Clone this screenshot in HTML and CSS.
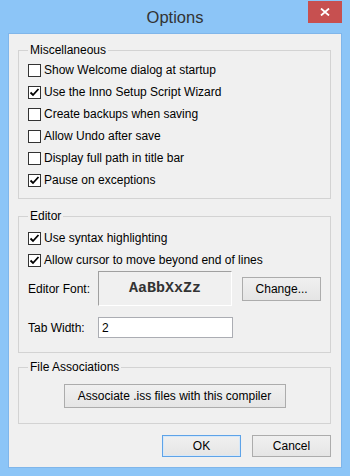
FILE: index.html
```html
<!DOCTYPE html>
<html lang="en">
<head>
    <meta charset="UTF-8">
    <meta name="viewport" content="width=device-width, initial-scale=1.0">
    <title>Options</title>
    <link rel="stylesheet" href="styles.css">
</head>
<body>

<div class="window">
    <div class="titlebar">
        <span></span>
        <div class="title">Options</div>
        <div class="close-btn">
            <svg width="10" height="8" viewBox="0 0 10 8"><path d="M1 0.5 L9 7.5 M9 0.5 L1 7.5" stroke="#fff" stroke-width="1.8" fill="none"/></svg>
        </div>
    </div>

    <div class="client">
        <fieldset class="group group-misc">
            <legend>Miscellaneous</legend>
            <label class="check-row"><span class="box"></span>Show Welcome dialog at startup</label>
            <label class="check-row"><span class="box"><svg width="11" height="11" viewBox="0 0 11 11"><path d="M1.5 5.5 L4 8 L9.5 2" stroke="#000" stroke-width="1.8" fill="none"/></svg></span>Use the Inno Setup Script Wizard</label>
            <label class="check-row"><span class="box"></span>Create backups when saving</label>
            <label class="check-row"><span class="box"></span>Allow Undo after save</label>
            <label class="check-row"><span class="box"></span>Display full path in title bar</label>
            <label class="check-row"><span class="box"><svg width="11" height="11" viewBox="0 0 11 11"><path d="M1.5 5.5 L4 8 L9.5 2" stroke="#000" stroke-width="1.8" fill="none"/></svg></span>Pause on exceptions</label>
        </fieldset>

        <fieldset class="group group-editor">
            <legend>Editor</legend>
            <label class="check-row"><span class="box"><svg width="11" height="11" viewBox="0 0 11 11"><path d="M1.5 5.5 L4 8 L9.5 2" stroke="#000" stroke-width="1.8" fill="none"/></svg></span>Use syntax highlighting</label>
            <label class="check-row"><span class="box"><svg width="11" height="11" viewBox="0 0 11 11"><path d="M1.5 5.5 L4 8 L9.5 2" stroke="#000" stroke-width="1.8" fill="none"/></svg></span>Allow cursor to move beyond end of lines</label>
            <div class="font-row">
                <span class="field-label">Editor Font:</span>
                <div class="font-preview">AaBbXxZz</div>
                <button class="btn btn-change">Change...</button>
            </div>
            <div class="tab-row">
                <span class="field-label">Tab Width:</span>
                <input class="tab-input" type="text" value="2">
            </div>
        </fieldset>

        <fieldset class="group group-files">
            <legend>File Associations</legend>
            <button class="btn btn-assoc">Associate .iss files with this compiler</button>
        </fieldset>

        <div class="dialog-buttons">
            <button class="btn btn-dialog btn-default">OK</button>
            <button class="btn btn-dialog">Cancel</button>
        </div>
    </div>
</div>

</body>
</html>
```

FILE: styles.css
```css
/* General Styling */
body {
    margin: 0;
    padding: 0;
    background-color: #8cc5f7;
    font-family: 'Liberation Sans', Arial, sans-serif;
    font-size: 12px;
    color: #000;
}

.window {
    width: 350px;
    height: 476px;
    display: flex;
    flex-direction: column;
}

/* Title bar */
.titlebar {
    height: 33px;
    display: grid;
    grid-template-columns: 1fr auto 1fr;
}

.title {
    font-size: 16.5px;
    color: #333;
    line-height: 31px;
    padding-top: 2px;
}

.close-btn {
    justify-self: end;
    align-self: start;
    width: 34px;
    height: 22px;
    margin-top: 1px;
    margin-right: 8px;
    background-color: #c75050;
    display: flex;
    align-items: center;
    justify-content: center;
}

/* Client area */
.client {
    margin: 0 8px;
    height: 435px;
    box-sizing: border-box;
    border: 1px solid #80b6ea;
    background-color: #f0f0f0;
    padding: 9px 10px 0 9px;
}

.group {
    margin: 0;
    border: 1px solid #d3d3d3;
    padding: 2px 9px 6px 9px;
    min-width: 0;
}

.group legend {
    padding: 0 2px;
    line-height: 15px;
}

.group-misc {
    padding-top: 1px;
    padding-bottom: 7px;
}

.group-editor {
    margin-top: 10px;
    padding-top: 3px;
    padding-bottom: 14px;
}

.group-files {
    margin-top: 7px;
    padding-top: 9px;
    padding-bottom: 15px;
    display: flex;
    justify-content: center;
}

/* Checkboxes */
.check-row {
    height: 22px;
    display: flex;
    align-items: center;
    gap: 3px;
}

.box {
    width: 13px;
    height: 13px;
    box-sizing: border-box;
    border: 1px solid #333;
    background-color: #fff;
    display: flex;
    align-items: center;
    justify-content: center;
    flex-shrink: 0;
}

/* Editor rows */
.font-row, .tab-row {
    display: flex;
    align-items: center;
}

.tab-row {
    margin-top: 11px;
}

.field-label {
    width: 70px;
}

.font-preview {
    width: 135px;
    height: 35px;
    box-sizing: border-box;
    border: 1px solid #a0a0a0;
    border-right-color: #fff;
    border-bottom-color: #fff;
    display: flex;
    align-items: center;
    justify-content: center;
    font-family: 'Courier New', 'Nimbus Mono PS', FreeMono, 'Liberation Mono', monospace;
    font-size: 15px;
    font-weight: bold;
    color: #333;
}

.tab-input {
    width: 135px;
    height: 21px;
    box-sizing: border-box;
    margin: 0;
    border: 1px solid #abadb3;
    padding: 0 3px;
    font-family: 'Liberation Sans', Arial, sans-serif;
    font-size: 12px;
    color: #000;
    background-color: #fff;
}

/* Buttons */
.btn {
    box-sizing: border-box;
    margin: 0;
    padding: 0;
    border: 1px solid #acacac;
    background: linear-gradient(#f0f0f0, #e5e5e5);
    font-family: 'Liberation Sans', Arial, sans-serif;
    font-size: 12px;
    color: #000;
}

.btn-change {
    width: 79px;
    height: 24px;
    margin-left: 10px;
}

.btn-assoc {
    width: 222px;
    height: 24px;
}

.dialog-buttons {
    margin-top: 11px;
    display: flex;
    justify-content: flex-end;
    gap: 11px;
}

.btn-dialog {
    width: 79px;
    height: 22px;
}

.btn-default {
    border-color: #5ea3e8;
    box-shadow: inset 0 0 0 1px #d6e8f9;
}
```
